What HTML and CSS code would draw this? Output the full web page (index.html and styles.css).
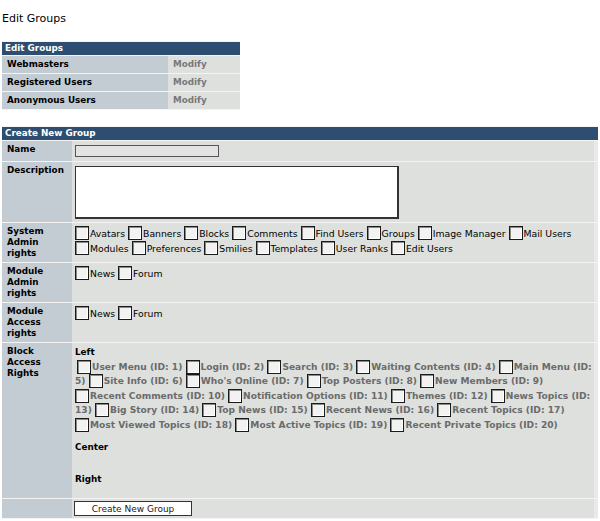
FILE: index.html
```html
<!DOCTYPE html>
<html>
<head>
    <title>Edit Groups</title>
    <link rel="stylesheet" href="styles.css">
</head>
<body>
    <h4 class="page-title">Edit Groups</h4>

    <table class="outer groups" cellspacing="1">
        <tr><th colspan="2">Edit Groups</th></tr>
        <tr><td class="head">Webmasters</td><td class="even modify">Modify</td></tr>
        <tr><td class="head">Registered Users</td><td class="even modify">Modify</td></tr>
        <tr><td class="head">Anonymous Users</td><td class="even modify">Modify</td></tr>
    </table>

    <form class="group-form">
        <table class="outer create" cellspacing="1">
            <tr><th colspan="2">Create New Group</th></tr>
            <tr class="row-name">
                <td class="head">Name</td>
                <td class="even"><input type="text" class="name-input"></td>
            </tr>
            <tr class="row-desc">
                <td class="head">Description</td>
                <td class="even"><textarea class="desc-input"></textarea></td>
            </tr>
            <tr class="row-rights">
                <td class="head">System Admin rights</td>
                <td class="even checks">
                    <label><input type="checkbox">Avatars</label>
                    <label><input type="checkbox">Banners</label>
                    <label><input type="checkbox">Blocks</label>
                    <label><input type="checkbox">Comments</label>
                    <label><input type="checkbox">Find Users</label>
                    <label><input type="checkbox">Groups</label>
                    <label><input type="checkbox">Image Manager</label>
                    <label><input type="checkbox">Mail Users</label>
                    <label><input type="checkbox">Modules</label>
                    <label><input type="checkbox">Preferences</label>
                    <label><input type="checkbox">Smilies</label>
                    <label><input type="checkbox">Templates</label>
                    <label><input type="checkbox">User Ranks</label>
                    <label><input type="checkbox">Edit Users</label>
                </td>
            </tr>
            <tr class="row-rights">
                <td class="head">Module Admin rights</td>
                <td class="even checks">
                    <label><input type="checkbox">News</label>
                    <label><input type="checkbox">Forum</label>
                </td>
            </tr>
            <tr class="row-rights">
                <td class="head">Module Access rights</td>
                <td class="even checks">
                    <label><input type="checkbox">News</label>
                    <label><input type="checkbox">Forum</label>
                </td>
            </tr>
            <tr class="row-blocks">
                <td class="head">Block Access Rights</td>
                <td class="even">
                    <div class="side">Left</div>
                    <!-- box and first word stay together, the rest may wrap -->
                    <div class="checks blocks">
                        <label><span class="nb"><input type="checkbox">User</span> Menu (ID: 1)</label>
                        <label><span class="nb"><input type="checkbox">Login</span> (ID: 2)</label>
                        <label><span class="nb"><input type="checkbox">Search</span> (ID: 3)</label>
                        <label><span class="nb"><input type="checkbox">Waiting</span> Contents (ID: 4)</label>
                        <label><span class="nb"><input type="checkbox">Main</span> Menu (ID: 5)</label>
                        <label><span class="nb"><input type="checkbox">Site</span> Info (ID: 6)</label>
                        <label><span class="nb"><input type="checkbox">Who's</span> Online (ID: 7)</label>
                        <label><span class="nb"><input type="checkbox">Top</span> Posters (ID: 8)</label>
                        <label><span class="nb"><input type="checkbox">New</span> Members (ID: 9)</label>
                        <label><span class="nb"><input type="checkbox">Recent</span> Comments (ID: 10)</label>
                        <label><span class="nb"><input type="checkbox">Notification</span> Options (ID: 11)</label>
                        <label><span class="nb"><input type="checkbox">Themes</span> (ID: 12)</label>
                        <label><span class="nb"><input type="checkbox">News</span> Topics (ID: 13)</label>
                        <label><span class="nb"><input type="checkbox">Big</span> Story (ID: 14)</label>
                        <label><span class="nb"><input type="checkbox">Top</span> News (ID: 15)</label>
                        <label><span class="nb"><input type="checkbox">Recent</span> News (ID: 16)</label>
                        <label><span class="nb"><input type="checkbox">Recent</span> Topics (ID: 17)</label>
                        <label><span class="nb"><input type="checkbox">Most</span> Viewed Topics (ID: 18)</label>
                        <label><span class="nb"><input type="checkbox">Most</span> Active Topics (ID: 19)</label>
                        <label><span class="nb"><input type="checkbox">Recent</span> Private Topics (ID: 20)</label>
                    </div>
                    <div class="side side-center">Center</div>
                    <div class="side side-right">Right</div>
                </td>
            </tr>
            <tr class="row-submit">
                <td class="head"></td>
                <td class="even"><button type="button" class="submit">Create New Group</button></td>
            </tr>
        </table>
    </form>
</body>
</html>
```

FILE: styles.css
```css
body {
    margin: 0;
    padding: 12px 2px 0 2px;
    background: #fff;
    font-family: "DejaVu Sans", Verdana, sans-serif;
    font-size: 9.3px;
    color: #000;
}

.page-title {
    margin: 0 0 16px 0;
    font-size: 11px;
    font-weight: normal;
    line-height: 13px;
}

table.outer {
    border-collapse: separate;
    border-spacing: 0 1px;
    background-color: #f3f4f3;
}

table.outer th {
    background-color: #2d4e70;
    color: #fff;
    font-size: 8.8px;
    font-weight: bold;
    text-align: left;
    padding: 0 3px;
    height: 13px;
    line-height: 13px;
}

td.head {
    background-color: #c3ccd3;
    font-size: 8.8px;
    font-weight: bold;
    vertical-align: top;
    padding: 3px 5px;
    line-height: 11px;
}

td.even {
    background-color: #dde0dd;
    vertical-align: top;
    padding: 3px 3px;
}

/* small table of existing groups */
.groups {
    width: 238px;
}

.groups td {
    height: 12px;
    padding: 3px 5px 2px 5px;
}

.groups td.head {
    width: 156px;
}

.modify {
    color: #787878;
    font-size: 8.8px;
    font-weight: bold;
}

.group-form {
    margin-top: 16px;
}

.create {
    width: 596px;
}

.create td.head {
    width: 60px;
}

.create td.even {
    box-shadow: inset -4px 0 0 #e8eae8;
}

.name-input {
    display: block;
    box-sizing: border-box;
    width: 144px;
    height: 12px;
    margin: 1px 0 1px 0;
    padding: 0;
    border: 1px solid #555;
    background: #e2e3e2;
}

.desc-input {
    display: block;
    box-sizing: border-box;
    width: 324px;
    height: 53px;
    margin: 1px 0 0 0;
    padding: 0;
    border: 1px solid #333;
    border-right-width: 2px;
    border-bottom-width: 2px;
    background: #fff;
    resize: none;
    overflow: hidden;
}

.checks {
    line-height: 15px;
}

.checks label {
    white-space: nowrap;
}

.checks input[type="checkbox"] {
    appearance: none;
    -webkit-appearance: none;
    box-sizing: border-box;
    width: 14px;
    height: 14px;
    margin: 0 1px 0 0;
    vertical-align: -3px;
    border: 1px solid #1a1a1a;
    box-shadow: inset 1px 1px 0 #8a8a8a, inset -1px -1px 0 #fff;
    background: #f2f2f2;
}

tr.row-rights {
    height: 39px;
}

.side {
    font-size: 8.8px;
    font-weight: bold;
    line-height: 12px;
}

/* block list: bold grey labels, long ones wrap inside the label */
.blocks {
    margin-top: 2px;
    line-height: 14.4px;
    color: #6b6b6b;
    font-size: 9.1px;
    font-weight: bold;
    text-indent: 2px;
}

.blocks label {
    white-space: normal;
}

.blocks .nb {
    white-space: nowrap;
}

.blocks input[type="checkbox"] {
    vertical-align: -4px;
}

.side-center {
    margin-top: 9px;
}

.side-right {
    margin-top: 20px;
    margin-bottom: 10px;
}

.row-submit td {
    padding-top: 2px;
    padding-bottom: 2px;
}

.submit {
    display: block;
    margin-left: -1px;
    width: 118px;
    height: 15px;
    padding: 0;
    border: 1px solid #333;
    background: #fff;
    font-family: "DejaVu Sans", Verdana, sans-serif;
    font-size: 9px;
    color: #222;
    line-height: 12px;
}
```
